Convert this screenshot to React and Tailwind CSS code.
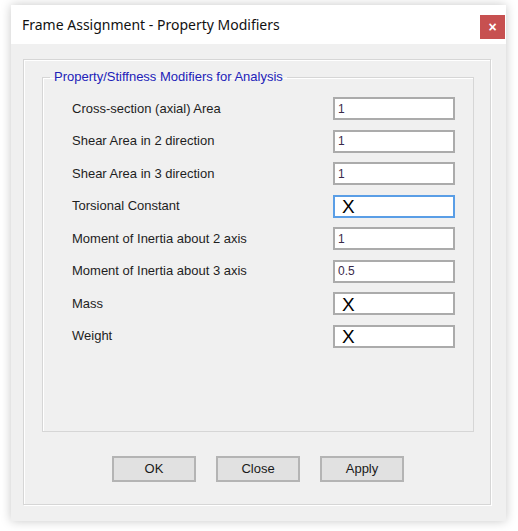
import React from "react";

const rows = [
  { label: "Cross-section (axial) Area", value: "1" },
  { label: "Shear Area in 2 direction", value: "1" },
  { label: "Shear Area in 3 direction", value: "1" },
  { label: "Torsional Constant", value: "X", focused: true },
  { label: "Moment of Inertia about 2 axis", value: "1" },
  { label: "Moment of Inertia about 3 axis", value: "0.5" },
  { label: "Mass", value: "X" },
  { label: "Weight", value: "X" },
];

function ValueBox({ value, focused }) {
  const big = value === "X";
  return (
    <div
      className={`flex h-[23px] w-[122px] items-center bg-white border-2 ${
        focused ? "border-[#5a9ee6]" : "border-[#ababab]"
      } ${big ? "pl-[7px] pt-[3px] text-[19px] text-black" : "pl-[3px] text-[12px] text-[#3a2a4a]"}`}
    >
      {value}
    </div>
  );
}

function WinButton({ children }) {
  return (
    <button
      type="button"
      className="h-[26px] w-[84px] border-2 border-[#b4b4b4] bg-[#e1e1e1] text-[13px] text-[#1a1a1a]"
    >
      {children}
    </button>
  );
}

export default function App() {
  return (
    <div
      className="min-h-screen bg-white pl-[11px] pt-[5px]"
      style={{ fontFamily: '"Liberation Sans", Arial, sans-serif' }}
    >
      <div className="flex h-[516px] w-[495px] flex-col bg-[#f0f0f0] shadow-[0_0_10px_rgba(0,0,0,0.22)]">
        {/* title bar */}
        <div className="flex h-[39px] items-start justify-between bg-white">
          <div
            className="pl-[11px] pt-[10px] text-[14px] leading-[20px] text-[#111]"
            style={{ fontFamily: '"Noto Sans", "Open Sans", sans-serif' }}
          >
            Frame Assignment - Property Modifiers
          </div>
          <button
            type="button"
            className="mr-[1px] mt-[10px] flex h-[24px] w-[25px] items-center justify-center bg-[#c75050] text-[14px] font-bold leading-none text-white"
          >
            ×
          </button>
        </div>

        <div className="flex-1 pb-[16px] pl-[12px] pr-[15px] pt-[15px]">
          <div className="flex h-full flex-col border border-[#d6d6d6] shadow-[inset_1px_1px_0_#fff,1px_1px_0_#fff]">
            <fieldset className="ml-[18px] mr-[16px] mt-[9px] h-[363px] border border-[#d6d6d6] pl-[29px] pt-[12px] shadow-[inset_1px_1px_0_#fff]">
              <legend className="-ml-[22px] px-[4px] text-[13px] leading-[16px] text-[#2222b8]">
                Property/Stiffness Modifiers for Analysis
              </legend>
              <div className="grid grid-cols-[261px_122px] gap-y-[9.5px]">
                {rows.map((r) => (
                  <React.Fragment key={r.label}>
                    <div className="flex h-[23px] items-center text-[13px] text-[#1e1e1e]">
                      {r.label}
                    </div>
                    <ValueBox value={r.value} focused={r.focused} />
                  </React.Fragment>
                ))}
              </div>
            </fieldset>

            <div className="mt-[24px] flex justify-center gap-[20px] pl-[2px]">
              <WinButton>OK</WinButton>
              <WinButton>Close</WinButton>
              <WinButton>Apply</WinButton>
            </div>
          </div>
        </div>
      </div>
    </div>
  );
}
